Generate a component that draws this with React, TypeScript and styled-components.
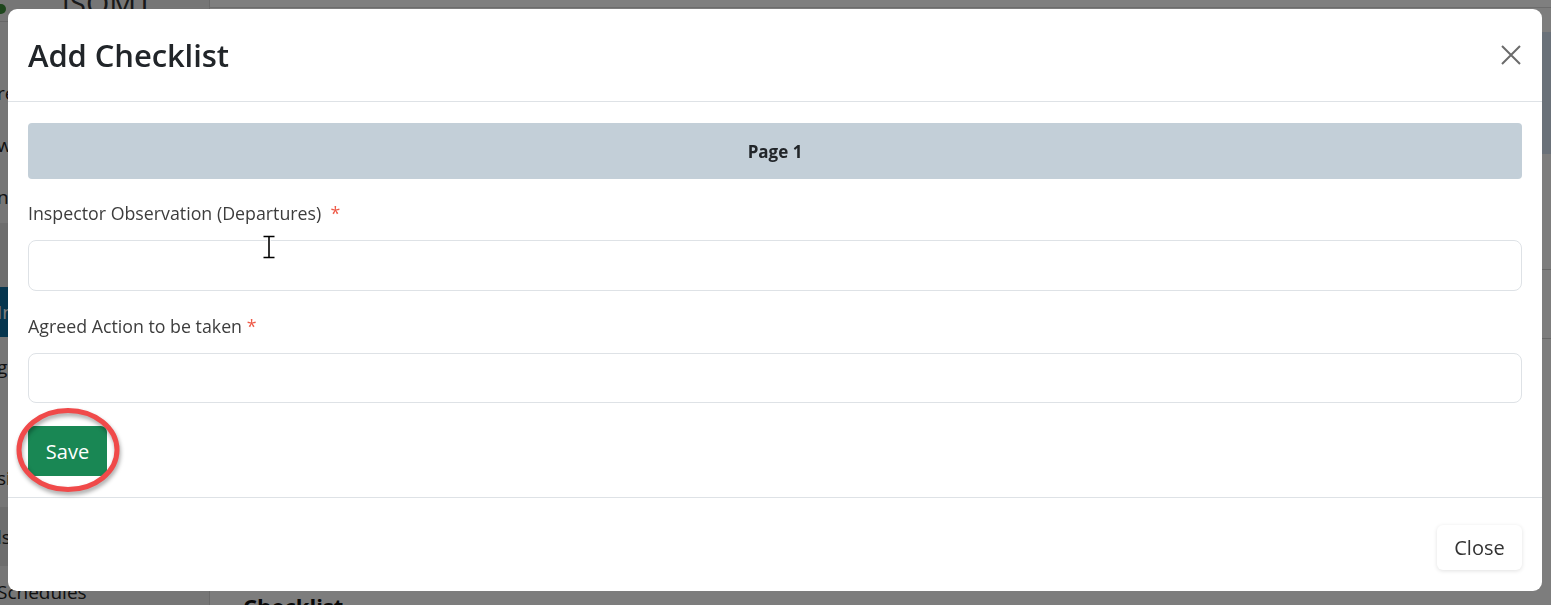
import React from "react";
import styled, { createGlobalStyle } from "styled-components";

const Global = createGlobalStyle`
  html, body { margin: 0; padding: 0; }
  body {
    font-family: "Open Sans", "Noto Sans", "Liberation Sans", sans-serif;
    color: #212529;
    overflow: hidden;
  }
  * { box-sizing: border-box; }
`;

const Page = styled.div`
  display: flex;
  width: 100vw;
  height: 605px;
  background: #fafafa;
  overflow: hidden;
`;

const Sidebar = styled.aside`
  width: 210px;
  flex: none;
  background: #ececec;
  border-right: 1px solid #d4d4d4;
  display: flex;
  flex-direction: column;
  overflow: hidden;
`;

const Logo = styled.div`
  height: 85px;
  flex: none;
  display: flex;
  flex-direction: column;
  margin-top: -18px;
`;

const LogoRow = styled.div`
  height: 40px;
  display: flex;
  align-items: flex-start;
  font-size: 30px;
  color: #333;
  border-bottom: 1px solid #cfcfcf;
`;

const LogoMark = styled.span`
  width: 10px;
  height: 10px;
  border-radius: 50%;
  background: #3c8d3a;
  margin: 22px 0 0 -4px;
`;

const LogoText = styled.span`
  margin-left: 56px;
`;

const NavItem = styled.div<{ $variant?: "active" | "group" | "plain"; $h: number }>`
  height: ${(p) => p.$h}px;
  flex: none;
  display: flex;
  align-items: center;
  font-size: 19px;
  text-indent: -3px;
  white-space: nowrap;
  color: ${(p) => (p.$variant === "active" ? "#fff" : "#222")};
  background: ${(p) =>
    p.$variant === "active" ? "#0c6b9c" : p.$variant === "group" ? "#dadada" : "transparent"};
`;

const Main = styled.main`
  flex: 1;
  display: flex;
  flex-direction: column;
  background: #fbfbfb;
`;

const TopBar = styled.div`
  height: 8px;
  flex: none;
  border-bottom: 1px solid #d8d8d8;
  background: #fff;
`;

const PageHeaderCard = styled.div`
  margin-top: 24px;
  height: 122px;
  flex: none;
  background: #d4e3f2;
`;

const TableRows = styled.div`
  margin-top: 115px;
  height: 70px;
  flex: none;
  border-top: 1px solid #cfcfcf;
  border-bottom: 1px solid #cfcfcf;
`;

const MainHeading = styled.h2`
  margin: auto 0 -16px 33px;
  font-size: 22px;
  font-weight: 700;
  color: #111;
`;

const Backdrop = styled.div`
  position: fixed;
  inset: 0;
  background: rgba(0, 0, 0, 0.5);
`;

const Dialog = styled.div`
  position: fixed;
  top: 9px;
  left: 8px;
  width: 1534px;
  height: 582px;
  background: #fff;
  border-radius: 9px;
  display: flex;
  flex-direction: column;
  overflow: hidden;
`;

const Header = styled.div`
  height: 93px;
  flex: none;
  padding: 0 20px;
  display: flex;
  align-items: center;
  justify-content: space-between;
  border-bottom: 1px solid #dee2e6;
`;

const Title = styled.h5`
  margin: 0;
  font-size: 31px;
  font-weight: 600;
  color: #212529;
  letter-spacing: -0.1px;
`;

const CloseX = styled.button`
  width: 22px;
  height: 22px;
  padding: 0;
  border: none;
  background: none;
  display: flex;
  align-items: center;
  justify-content: center;
`;

const Body = styled.div`
  flex: 1;
  padding: 21px 20px 0;
  display: flex;
  flex-direction: column;
`;

const PageBar = styled.div`
  height: 56px;
  border-radius: 4px;
  background: #c3cfd8;
  display: flex;
  align-items: center;
  justify-content: center;
  font-size: 17px;
  font-weight: 700;
  color: #212529;
`;

const Label = styled.label<{ $top: number }>`
  margin-top: ${(p) => p.$top}px;
  line-height: 27px;
  font-size: 17.8px;
  color: #3d3d3d;
  white-space: pre;
`;

const Req = styled.span`
  color: #ee5a48;
`;

const FieldWrap = styled.div`
  position: relative;
  margin-top: 13px;
`;

const Input = styled.input<{ $h: number }>`
  display: block;
  width: 100%;
  height: ${(p) => p.$h}px;
  border: 1px solid #dee2e6;
  border-radius: 8px;
  padding: 0 16px;
  font-size: 18px;
  background: #fff;
`;

const Cursor = styled.svg`
  position: absolute;
  left: 234px;
  top: -5px;
  pointer-events: none;
`;

const SaveWrap = styled.div`
  position: relative;
  margin-top: 23px;
  align-self: flex-start;
`;

const SaveButton = styled.button`
  height: 50px;
  width: 79px;
  border: none;
  border-radius: 6px;
  background: #198754;
  color: #fff;
  font-family: inherit;
  font-size: 20px;
  display: flex;
  align-items: center;
  justify-content: center;
`;

const Annotation = styled.svg`
  position: absolute;
  left: -12px;
  top: -19px;
  pointer-events: none;
  overflow: visible;
  filter: drop-shadow(1px 3px 2px rgba(0, 0, 0, 0.35));
`;

const Footer = styled.div`
  height: 94px;
  flex: none;
  border-top: 1px solid #dee2e6;
  display: flex;
  justify-content: flex-end;
  align-items: flex-start;
  padding: 27px 20px 0;
`;

const CloseButton = styled.button`
  width: 85px;
  height: 45px;
  border: none;
  border-radius: 6px;
  background: #fff;
  box-shadow: 0 1px 4px rgba(0, 0, 0, 0.12);
  font-family: inherit;
  font-size: 20px;
  color: #333;
  display: flex;
  align-items: center;
  justify-content: center;
`;

const navItems: { label: string; h: number; v?: "active" | "group" | "plain" }[] = [
  { label: "reports", h: 52 },
  { label: "workflows", h: 52 },
  { label: "notifications", h: 52 },
  { label: "", h: 64, v: "group" },
  { label: "Inspections", h: 50, v: "active" },
  { label: "general", h: 60 },
  { label: "", h: 52 },
  { label: "sites", h: 58 },
  { label: "ls", h: 59, v: "group" },
  { label: "Schedules", h: 52 },
];

export default function App() {
  return (
    <>
      <Global />
      <Page>
        <Sidebar>
          <Logo>
            <LogoRow>
              <LogoMark />
              <LogoText>iSOMT</LogoText>
            </LogoRow>
          </Logo>
          {navItems.map((n, i) => (
            <NavItem key={i} $h={n.h} $variant={n.v}>
              {n.label}
            </NavItem>
          ))}
        </Sidebar>
        <Main>
          <TopBar />
          <PageHeaderCard />
          <TableRows />
          <MainHeading>Checklist</MainHeading>
        </Main>
      </Page>
      <Backdrop />
      <Dialog role="dialog">
        <Header>
          <Title>Add Checklist</Title>
          <CloseX aria-label="Close">
            <svg width="20" height="20" viewBox="0 0 20 20">
              <path d="M1 1 L19 19 M19 1 L1 19" stroke="#6b6b6b" strokeWidth="2" fill="none" />
            </svg>
          </CloseX>
        </Header>
        <Body>
          <PageBar>Page 1</PageBar>
          <Label $top={21}>
            {"Inspector Observation (Departures)  "}
            <Req>*</Req>
          </Label>
          <FieldWrap>
            <Input $h={51} />
            <Cursor width="14" height="24" viewBox="0 0 14 24">
              <path d="M1 1.5 H13 M1 22.5 H13 M7 1.5 V22.5" stroke="#fff" strokeWidth="3.5" fill="none" />
              <path d="M1.5 1.5 H12.5 M1.5 22.5 H12.5 M7 1.5 V22.5" stroke="#000" strokeWidth="1.6" fill="none" />
            </Cursor>
          </FieldWrap>
          <Label $top={22}>
            {"Agreed Action to be taken "}
            <Req>*</Req>
          </Label>
          <FieldWrap>
            <Input $h={50} />
          </FieldWrap>
          <SaveWrap>
            <SaveButton>Save</SaveButton>
            <Annotation width="104" height="86" viewBox="0 0 104 86">
              <ellipse cx="52" cy="43" rx="49" ry="39.5" stroke="#f04a4a" strokeWidth="5" fill="none" />
            </Annotation>
          </SaveWrap>
        </Body>
        <Footer>
          <CloseButton>Close</CloseButton>
        </Footer>
      </Dialog>
    </>
  );
}
